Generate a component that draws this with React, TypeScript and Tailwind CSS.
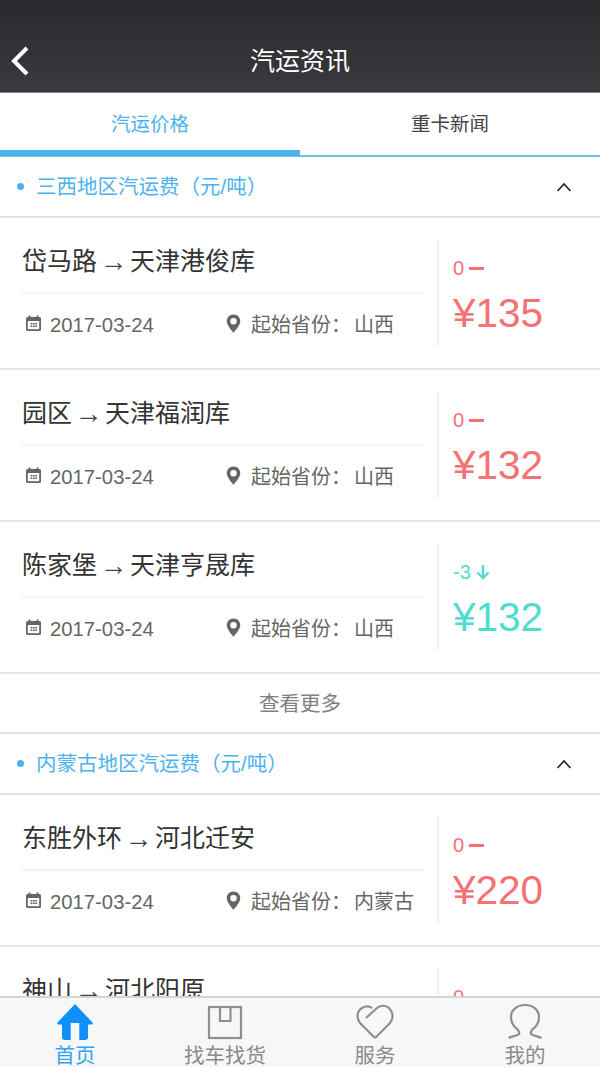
const cjk = "font-['Liberation_Sans','Noto_Sans_CJK_SC',sans-serif]";

const sections = [
  {
    title: "三西地区汽运费（元/吨）",
    more: true,
    rows: [
      { route: "岱马路", dest: "天津港俊库", province: "山西", delta: "0", price: "135", down: false },
      { route: "园区", dest: "天津福润库", province: "山西", delta: "0", price: "132", down: false },
      { route: "陈家堡", dest: "天津亨晟库", province: "山西", delta: "-3", price: "132", down: true },
    ],
  },
  {
    title: "内蒙古地区汽运费（元/吨）",
    more: false,
    rows: [
      { route: "东胜外环", dest: "河北迁安", province: "内蒙古", delta: "0", price: "220", down: false },
      { route: "神山", dest: "河北阳原", province: "内蒙古", delta: "0", price: "220", down: false },
    ],
  },
];

function CalendarIcon() {
  return (
    <svg width="17" height="17" viewBox="0 0 17 17" fill="none" className="-mt-[4px] shrink-0">
      <rect x="1" y="2" width="15" height="14" rx="1.5" fill="#666" />
      <rect x="2.800" y="6" width="11.400" height="8.200" fill="#fff" />
      <rect x="3.500" y="0.500" width="2" height="3" fill="#666" />
      <rect x="11.500" y="0.500" width="2" height="3" fill="#666" />
      <rect x="5.500" y="8" width="1.800" height="1.500" fill="#666" />
      <rect x="7.900" y="8" width="1.800" height="1.500" fill="#666" />
      <rect x="10.300" y="8" width="1.800" height="1.500" fill="#666" />
      <rect x="5.500" y="10.500" width="1.800" height="1.500" fill="#666" />
      <rect x="7.900" y="10.500" width="1.800" height="1.500" fill="#666" />
      <rect x="10.300" y="10.500" width="1.800" height="1.500" fill="#666" />
    </svg>
  );
}

function PinIcon() {
  return (
    <svg width="15" height="19" viewBox="0 0 16 20" className="-mt-[4px] shrink-0">
      <path
        fillRule="evenodd"
        fill="#666"
        d="M8 0.500C3.800 0.500 0.800 3.600 0.800 7.600 0.800 12.400 8 19.800 8 19.800S15.200 12.400 15.200 7.600C15.200 3.600 12.200 0.500 8 0.500ZM8 4.200A3.400 3.400 0 1 1 8 11 3.400 3.400 0 1 1 8 4.200Z"
      />
    </svg>
  );
}

function ChevronUp() {
  return (
    <svg width="16" height="10" viewBox="0 0 16 10" fill="none" stroke="#222" strokeWidth="1.6">
      <path d="M1.500 9L8 2l6.500 7" />
    </svg>
  );
}

type Row = (typeof sections)[number]["rows"][number];

function PriceRow({ row }: { row: Row }) {
  const color = row.down ? "text-[#4fdcd0]" : "text-[#f47174]";
  return (
    <div className="flex h-[152px] shrink-0 items-start border-b-2 border-[#e6e6e6] bg-white">
      <div className="ml-[22px] w-[402px] pt-[4px]">
        <div className="flex h-[72px] items-center border-b-2 border-[#f3f3f3] pt-[10px] text-[25px] text-[#333]">
          {row.route}
          <span className="mx-[2.500px] font-['Liberation_Sans'] text-[28px] leading-none text-[#444]">→</span>
          {row.dest}
        </div>
        <div className="flex h-[62px] items-center text-[20.300px] text-[#666]">
          <div className="flex w-[204px] items-center gap-[8px] pl-[3px]">
            <CalendarIcon />
            <span>2017-03-24</span>
          </div>
          <div className="flex items-center gap-[10px] text-[20px]">
            <PinIcon />
            <span className="whitespace-nowrap">
              起始省份：<span className="ml-[3px]">{row.province}</span>
            </span>
          </div>
        </div>
      </div>
      <div className="ml-[13px] mt-[21px] flex h-[107px] flex-col border-l-2 border-[#f3f3f3] pl-[14px]">
        <div className={`mt-[17px] flex h-[24px] items-center gap-[5px] text-[20px] ${color}`}>
          {row.delta}
          {row.down ? (
            <svg width="14" height="16" viewBox="0 0 14 16" fill="none" stroke="#4fdcd0" strokeWidth="2.400">
              <path d="M7 1v13M1.500 8.500L7 14l5.500-5.500" />
            </svg>
          ) : (
            <span className="h-[3px] w-[15px] bg-[#f47174]" />
          )}
        </div>
        <div className={`mt-[10px] text-[40.500px] leading-[46px] ${color}`}>¥{row.price}</div>
      </div>
    </div>
  );
}

function SectionHeader({ title }: { title: string }) {
  return (
    <div className="flex h-[61px] shrink-0 items-center border-b-2 border-[#e2e2e2] bg-white pl-[17px] pr-[28px]">
      <span className="h-[7px] w-[7px] rounded-full bg-[#4db2ee]" />
      <span className="ml-[12px] mt-[2px] text-[20.500px] text-[#4db2ee]">{title}</span>
      <span className="ml-auto flex">
        <ChevronUp />
      </span>
    </div>
  );
}

const tabIconClass = "h-[38px] w-[38px] shrink-0";
const tabLabelClass = "mt-[3px] leading-[23px]";

function TabBar() {
  return (
    <div className="absolute inset-x-0 bottom-0 flex h-[71px] border-t-2 border-[#d4d4d4] bg-[#f7f7f7] pt-[5px] text-[20.500px] text-[#8a8a8a]">
      <div className="flex flex-1 flex-col items-center text-[#35a3ee]">
        <svg viewBox="0 0 38 38" className={tabIconClass}>
          <path
            fill="#0f8ffa"
            d="M19 1L36.500 19.500c.7.8.3 2-.8 2H32V34a3 3 0 0 1-3 3H23.300V20H14.700V37H9a3 3 0 0 1-3-3V21.500H2.300c-1.100 0-1.500-1.200-.8-2Z"
          />
        </svg>
        <span className={tabLabelClass}>首页</span>
      </div>
      <div className="flex flex-1 flex-col items-center">
        <svg viewBox="0 0 38 38" fill="none" stroke="#8f8f8f" strokeWidth="2.200" className={tabIconClass}>
          <rect x="3" y="4" width="32" height="31" />
          <path d="M14 4v14h10.500V4" />
        </svg>
        <span className={tabLabelClass}>找车找货</span>
      </div>
      <div className="flex flex-1 flex-col items-center">
        <svg viewBox="0 0 38 38" fill="none" stroke="#8f8f8f" strokeWidth="2.200" className={tabIconClass}>
          <path d="M19 35L4 20C0 15 1 8 6 5C9 3 13 3 16 5" />
          <path d="M10 15L21 5C24 2 30 2 33 5C37 9 38 15 34 20L19 35" />
        </svg>
        <span className={tabLabelClass}>服务</span>
      </div>
      <div className="flex flex-1 flex-col items-center">
        <svg viewBox="0 0 38 38" fill="none" stroke="#8f8f8f" strokeWidth="2.200" className={tabIconClass}>
          <path d="M2.500 35C6 33 11 33 13 31C14 29 13 28 11 26C7 23 5 19 5 14C5 7 11 2 19 2C27 2 33 7 33 14C33 19 31 23 27 26C25 28 24 29 25 31C27 33 32 33 35.500 35" />
        </svg>
        <span className={tabLabelClass}>我的</span>
      </div>
    </div>
  );
}

export default function App() {
  return (
    <div className={`relative flex h-[1067px] w-[600px] flex-col overflow-hidden bg-white ${cjk}`}>
      <header className="relative flex h-[93px] shrink-0 items-end justify-center border-b border-[#8b8b8d] bg-gradient-to-b from-[#29292e] to-[#3a3a3e] pb-[13px] text-[25px] leading-[36px] text-white">
        <svg width="20" height="32" viewBox="0 0 20 32" fill="none" stroke="#fff" strokeWidth="4" className="absolute left-[10px] top-[45px]">
          <path d="M17 3L4 16l13 13" />
        </svg>
        汽运资讯
      </header>
      <div className="flex h-[64px] shrink-0 border-b-2 border-[#6fbfe6] text-[19.500px]">
        <div className="relative flex w-[300px] items-center justify-center pt-[1px] text-[#4db2ee]">
          汽运价格
          <span className="absolute inset-x-0 -bottom-[1px] h-[6px] bg-[#4db2ee]" />
        </div>
        <div className="flex w-[300px] items-center justify-center pt-[1px] text-[#444]">重卡新闻</div>
      </div>
      {sections.map((section) => (
        <div key={section.title} className="flex shrink-0 flex-col">
          <SectionHeader title={section.title} />
          {section.rows.map((row) => (
            <PriceRow key={row.route} row={row} />
          ))}
          {section.more && (
            <div className="flex h-[60px] shrink-0 items-center justify-center border-b-2 border-[#e2e2e2] pt-[2px] text-[20.500px] text-[#808080]">
              查看更多
            </div>
          )}
        </div>
      ))}
      <TabBar />
    </div>
  );
}
